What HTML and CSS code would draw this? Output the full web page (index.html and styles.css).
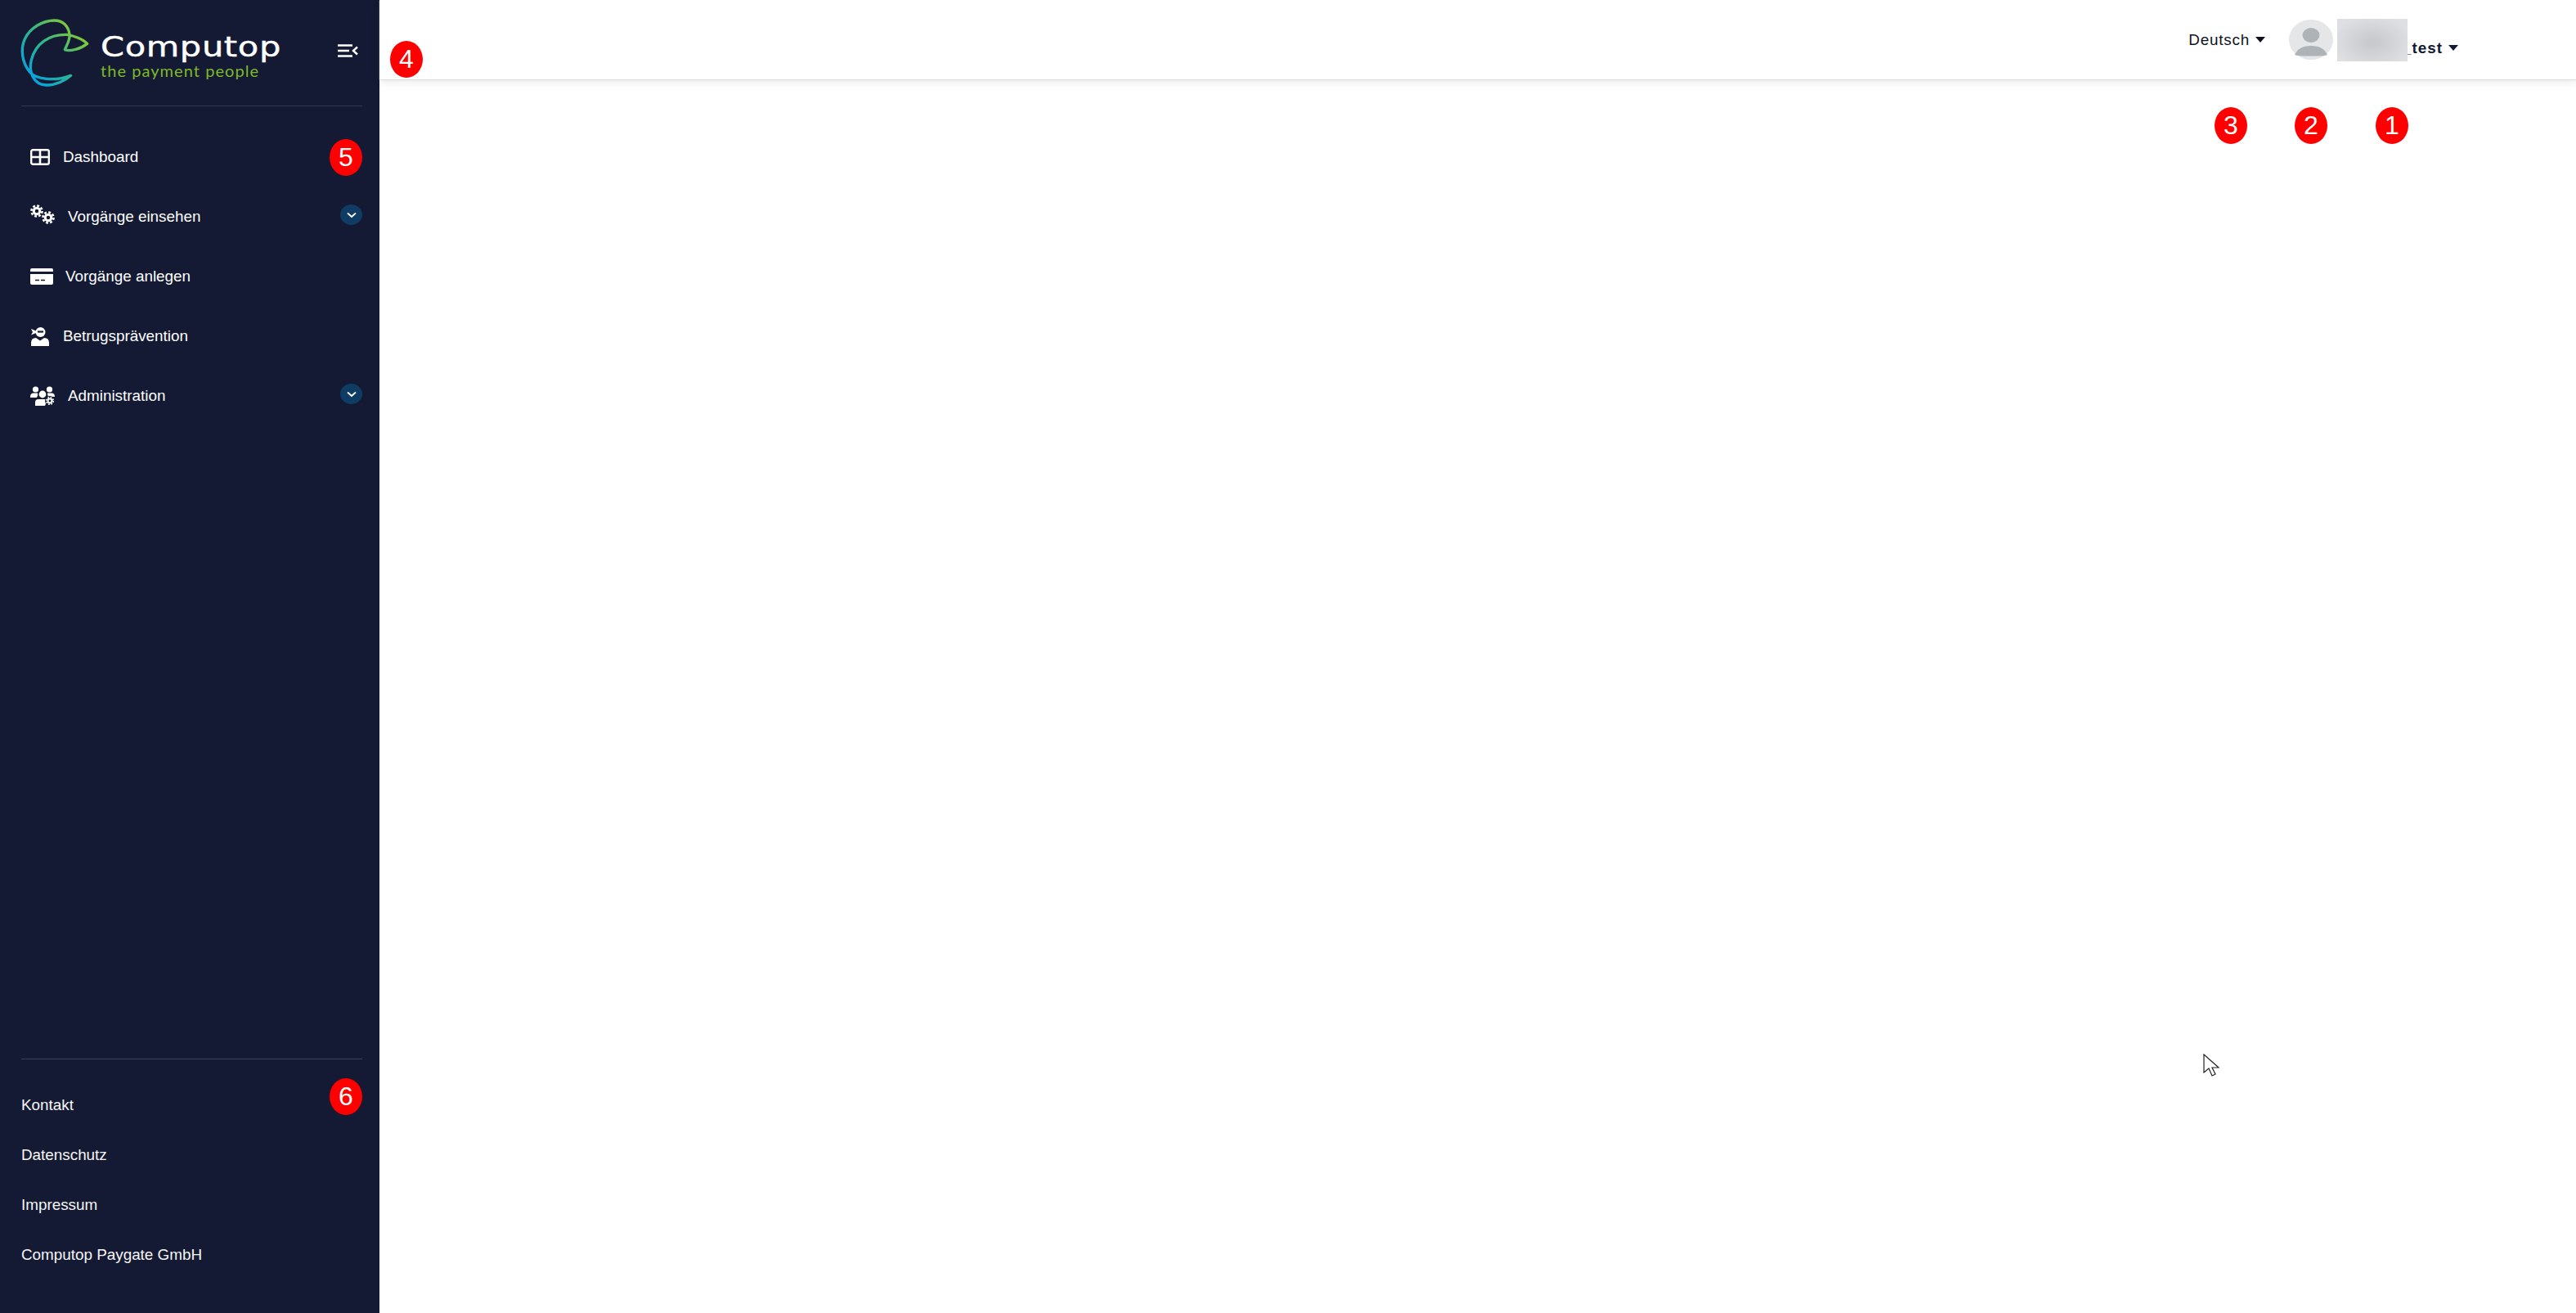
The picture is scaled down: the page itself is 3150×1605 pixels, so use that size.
FILE: index.html
```html
<!DOCTYPE html>
<html>

<head>
  <meta charset="utf-8">
  <title>Computop Paygate</title>
  <link rel="stylesheet" href="styles.css">
</head>

<body>
  <svg class="defs" width="0" height="0">
    <defs>
      <g id="gear">
        <circle cx="0" cy="0" r="6.6" fill="#fff"></circle>
        <circle cx="0" cy="0" r="8.2" fill="none" stroke="#fff" stroke-width="3.2" stroke-dasharray="3.6 2.84"></circle>
        <circle cx="0" cy="0" r="2.8" fill="#141a33"></circle>
      </g>
    </defs>
  </svg>

  <aside class="sidebar">
    <div class="brand">
      <svg class="brand-logo" width="90" height="90" viewBox="30 30 270 270">
        <defs>
          <linearGradient id="logoGrad" gradientUnits="userSpaceOnUse" x1="70" y1="260" x2="260" y2="70">
            <stop offset="0" stop-color="#00a3e8"></stop>
            <stop offset=".5" stop-color="#2fb58c"></stop>
            <stop offset="1" stop-color="#8ccb2e"></stop>
          </linearGradient>
        </defs>
        <path fill="none" stroke="url(#logoGrad)" stroke-width="10" stroke-linecap="round" stroke-linejoin="round" d="M80 235C50 200 45 150 60 115C80 70 130 45 170 45C200 45 220 65 225 95C228 115 215 135 208 152C225 160 265 150 290 130C275 115 240 100 215 97C150 95 100 130 85 190C75 230 90 280 140 282C175 283 210 265 230 247C170 270 100 260 80 235Z"></path>
      </svg>
      <div class="brand-text">
        <div class="brand-name">Computop</div>
        <div class="brand-claim">the payment people</div>
      </div>
      <svg class="menu-toggle" width="26" height="18" viewBox="0 0 26 18">
        <path fill="none" stroke="#fff" stroke-width="2.6" d="M1 2.5H19M1 9H15M1 15.5H19"></path>
        <path fill="none" stroke="#fff" stroke-width="2.4" d="M25 4.5L20 9L25 13.5"></path>
      </svg>
    </div>

    <ul class="nav">
      <li class="nav-item">
        <svg class="nav-icon" width="24" height="20" viewBox="0 0 24 20">
          <rect x="1.2" y="1.2" width="21.6" height="17.6" rx="2" fill="none" stroke="#fff" stroke-width="2.4"></rect>
          <path stroke="#fff" stroke-width="2.6" d="M12 1V19M1 10H23"></path>
        </svg>
        <span>Dashboard</span>
      </li>
      <li class="nav-item">
        <svg class="nav-icon icon-up" width="30" height="24" viewBox="0 0 30 24">
          <use href="#gear" transform="translate(8 8) scale(.8)"></use>
          <use href="#gear" transform="translate(22 16) scale(.8)"></use>
        </svg>
        <span>Vorgänge einsehen</span>
        <i class="nav-toggle">
          <svg width="12" height="8" viewBox="0 0 12 8"><path fill="none" stroke="#fff" stroke-width="1.8" d="M1 1.5L6 6L11 1.5"></path></svg>
        </i>
      </li>
      <li class="nav-item">
        <svg class="nav-icon icon-card" width="28" height="20" viewBox="0 0 28 20">
          <path fill="#fff" d="M2 0H26Q28 0 28 2V4H0V2Q0 0 2 0ZM0 7H28V18Q28 20 26 20H2Q0 20 0 18Z"></path>
          <path stroke="#141a33" stroke-width="1.6" d="M6 14.5H11M13 14.5H18"></path>
        </svg>
        <span>Vorgänge anlegen</span>
      </li>
      <li class="nav-item">
        <svg class="nav-icon" width="24" height="24" viewBox="0 0 24 24">
          <circle cx="12.5" cy="7" r="6" fill="#fff"></circle>
          <path fill="#fff" d="M1 3L7 5.5V8L1 10.5L3 7Z"></path>
          <path stroke="#141a33" stroke-width="2.2" d="M9 6.5H16"></path>
          <path fill="#fff" d="M1 24V20Q1 14 7 14L12 17.5L17 14Q23 14 23 20V24Z"></path>
        </svg>
        <span>Betrugsprävention</span>
      </li>
      <li class="nav-item">
        <svg class="nav-icon" width="30" height="24" viewBox="0 0 30 24">
          <circle cx="6.5" cy="4" r="3.6" fill="#fff"></circle>
          <circle cx="23.5" cy="4" r="3.6" fill="#fff"></circle>
          <circle cx="15" cy="10" r="4.4" fill="#fff"></circle>
          <path fill="#fff" d="M0 13Q0 8.5 4 8.5H9Q10 11 8 14H0ZM21 8.5H26Q30 8.5 30 13H22Q21 10 21 8.5ZM6 24V20Q6 16 10 16H20Q20 20 18 24Z"></path>
          <circle cx="24" cy="18" r="6" fill="#141a33"></circle>
          <use href="#gear" transform="translate(24 18) scale(.52)"></use>
        </svg>
        <span>Administration</span>
        <i class="nav-toggle">
          <svg width="12" height="8" viewBox="0 0 12 8"><path fill="none" stroke="#fff" stroke-width="1.8" d="M1 1.5L6 6L11 1.5"></path></svg>
        </i>
      </li>
    </ul>

    <ul class="foot">
      <li>Kontakt</li>
      <li>Datenschutz</li>
      <li>Impressum</li>
      <li>Computop Paygate GmbH</li>
    </ul>
  </aside>

  <main class="main">
    <header class="topbar">
      <div class="lang">Deutsch<b class="caret"></b></div>
      <div class="avatar">
        <svg width="54" height="49" viewBox="0 0 54 49">
          <ellipse cx="27" cy="24.5" rx="27" ry="24.5" fill="#e4e6e8"></ellipse>
          <ellipse cx="27" cy="19" rx="10.5" ry="9" fill="#adb3b7"></ellipse>
          <path fill="#adb3b7" d="M7 43Q12 32 27 32Q42 32 47 43Q44 44.500 27 44.500Q10 44.500 7 43Z"></path>
        </svg>
      </div>
      <div class="user">
        <span class="user-blur"></span>
        <span class="user-name">_test</span>
        <b class="caret caret-user"></b>
      </div>
    </header>
  </main>

  <span class="badge b1">1</span>
  <span class="badge b2">2</span>
  <span class="badge b3">3</span>
  <span class="badge b4">4</span>
  <span class="badge b5">5</span>
  <span class="badge b6">6</span>

  <svg class="cursor" width="20" height="28" viewBox="0 0 20 28">
    <path fill="#fff" stroke="#222" stroke-width="1.2" d="M1 1V23L7 18L11 27L15 25L11 17L19 17Z"></path>
  </svg>
</body>

</html>
```

FILE: styles.css
```css
* {
  margin: 0;
  padding: 0;
  box-sizing: border-box;
}

html,
body {
  height: 100%;
}

body {
  display: flex;
  overflow: hidden;
  background: #fff;
  font-family: "Liberation Sans", Arial, sans-serif;
}

li {
  list-style: none;
}

.defs {
  position: absolute;
}

.sidebar {
  display: flex;
  flex-direction: column;
  flex: none;
  width: 464px;
  height: 1605px;
  padding: 0 21px 0 26px;
  background: #141a33;
  color: #fff;
}

.brand {
  display: flex;
  align-items: center;
  height: 130px;
  padding-bottom: 1px;
  border-bottom: 1px solid #33384f;
}

.brand-logo {
  flex: none;
  margin-left: -6px;
  margin-top: 1px;
  margin-right: 13px;
}

.brand-text {
  flex: 1;
  margin-top: 9px;
}

.brand-name {
  font-family: "DejaVu Sans", sans-serif;
  font-size: 33px;
  line-height: 34px;
  letter-spacing: .5px;
  transform: scaleX(1.26);
  transform-origin: left;
  -webkit-text-stroke: .4px #fff;
}

.brand-claim {
  font-family: Lato, sans-serif;
  font-size: 20px;
  line-height: 22px;
  letter-spacing: 1.05px;
  color: #7db928;
}

.menu-toggle {
  margin-right: 5px;
  margin-bottom: 4px;
}

.nav {
  flex: 1;
  padding: 25px 0 0 11px;
}

.nav-item {
  display: flex;
  align-items: center;
  height: 73px;
  font-size: 18.85px;
}

.nav-icon {
  flex: none;
  margin-right: 16px;
}

.icon-up {
  margin-top: -6px;
}

.icon-card {
  margin-right: 15px;
}

.nav-toggle {
  display: flex;
  align-items: center;
  justify-content: center;
  width: 27px;
  height: 25px;
  margin-left: auto;
  margin-bottom: 4px;
  border-radius: 50%;
  background: #0f3c64;
}

.foot {
  height: 311px;
  padding-top: 25px;
  border-top: 1px solid #3a3f55;
  font-size: 18.85px;
}

.foot li {
  display: flex;
  align-items: center;
  height: 61px;
  color: #f6f6f6;
}

.main {
  flex: 1;
  min-width: 0;
}

.topbar {
  display: flex;
  align-items: center;
  justify-content: flex-end;
  height: 97px;
  padding-right: 144px;
  background: #fff;
  box-shadow: 0 1px 1px #ddd, 0 4px 10px rgba(0, 0, 0, .08);
  font-size: 18.85px;
}

.lang {
  display: flex;
  align-items: center;
  letter-spacing: .8px;
  color: #10131f;
}

.caret {
  width: 0;
  height: 0;
  margin-left: 7px;
  border-left: 6.5px solid transparent;
  border-right: 6.5px solid transparent;
  border-top: 7px solid #10131f;
}

.avatar {
  display: flex;
  margin-left: 29px;
}

.user {
  display: flex;
  align-items: center;
  margin-left: 5px;
}

.user-blur {
  position: relative;
  z-index: 1;
  width: 86px;
  height: 52px;
  margin-right: -6px;
  margin-top: 1px;
  background: radial-gradient(ellipse at 50% 55%, #c8cacd 10%, #dedfe2 80%);
}

.user-name {
  margin-top: 21px;
  font-weight: bold;
  letter-spacing: 1px;
  color: #141a33;
}

.caret-user {
  margin-top: 20px;
  border-top-color: #141a33;
}

.badge {
  position: absolute;
  display: flex;
  align-items: center;
  justify-content: center;
  width: 40px;
  height: 45px;
  border-radius: 50%;
  background: #f00;
  color: #fff;
  font-size: 32px;
}

.b1 {
  left: 2905px;
  top: 131px;
}

.b2 {
  left: 2806px;
  top: 131px;
}

.b3 {
  left: 2708px;
  top: 131px;
}

.b4 {
  left: 477px;
  top: 50px;
}

.b5 {
  left: 403px;
  top: 170px;
}

.b6 {
  left: 403px;
  top: 1318px;
}

.cursor {
  position: absolute;
  left: 2694px;
  top: 1288px;
}
```
